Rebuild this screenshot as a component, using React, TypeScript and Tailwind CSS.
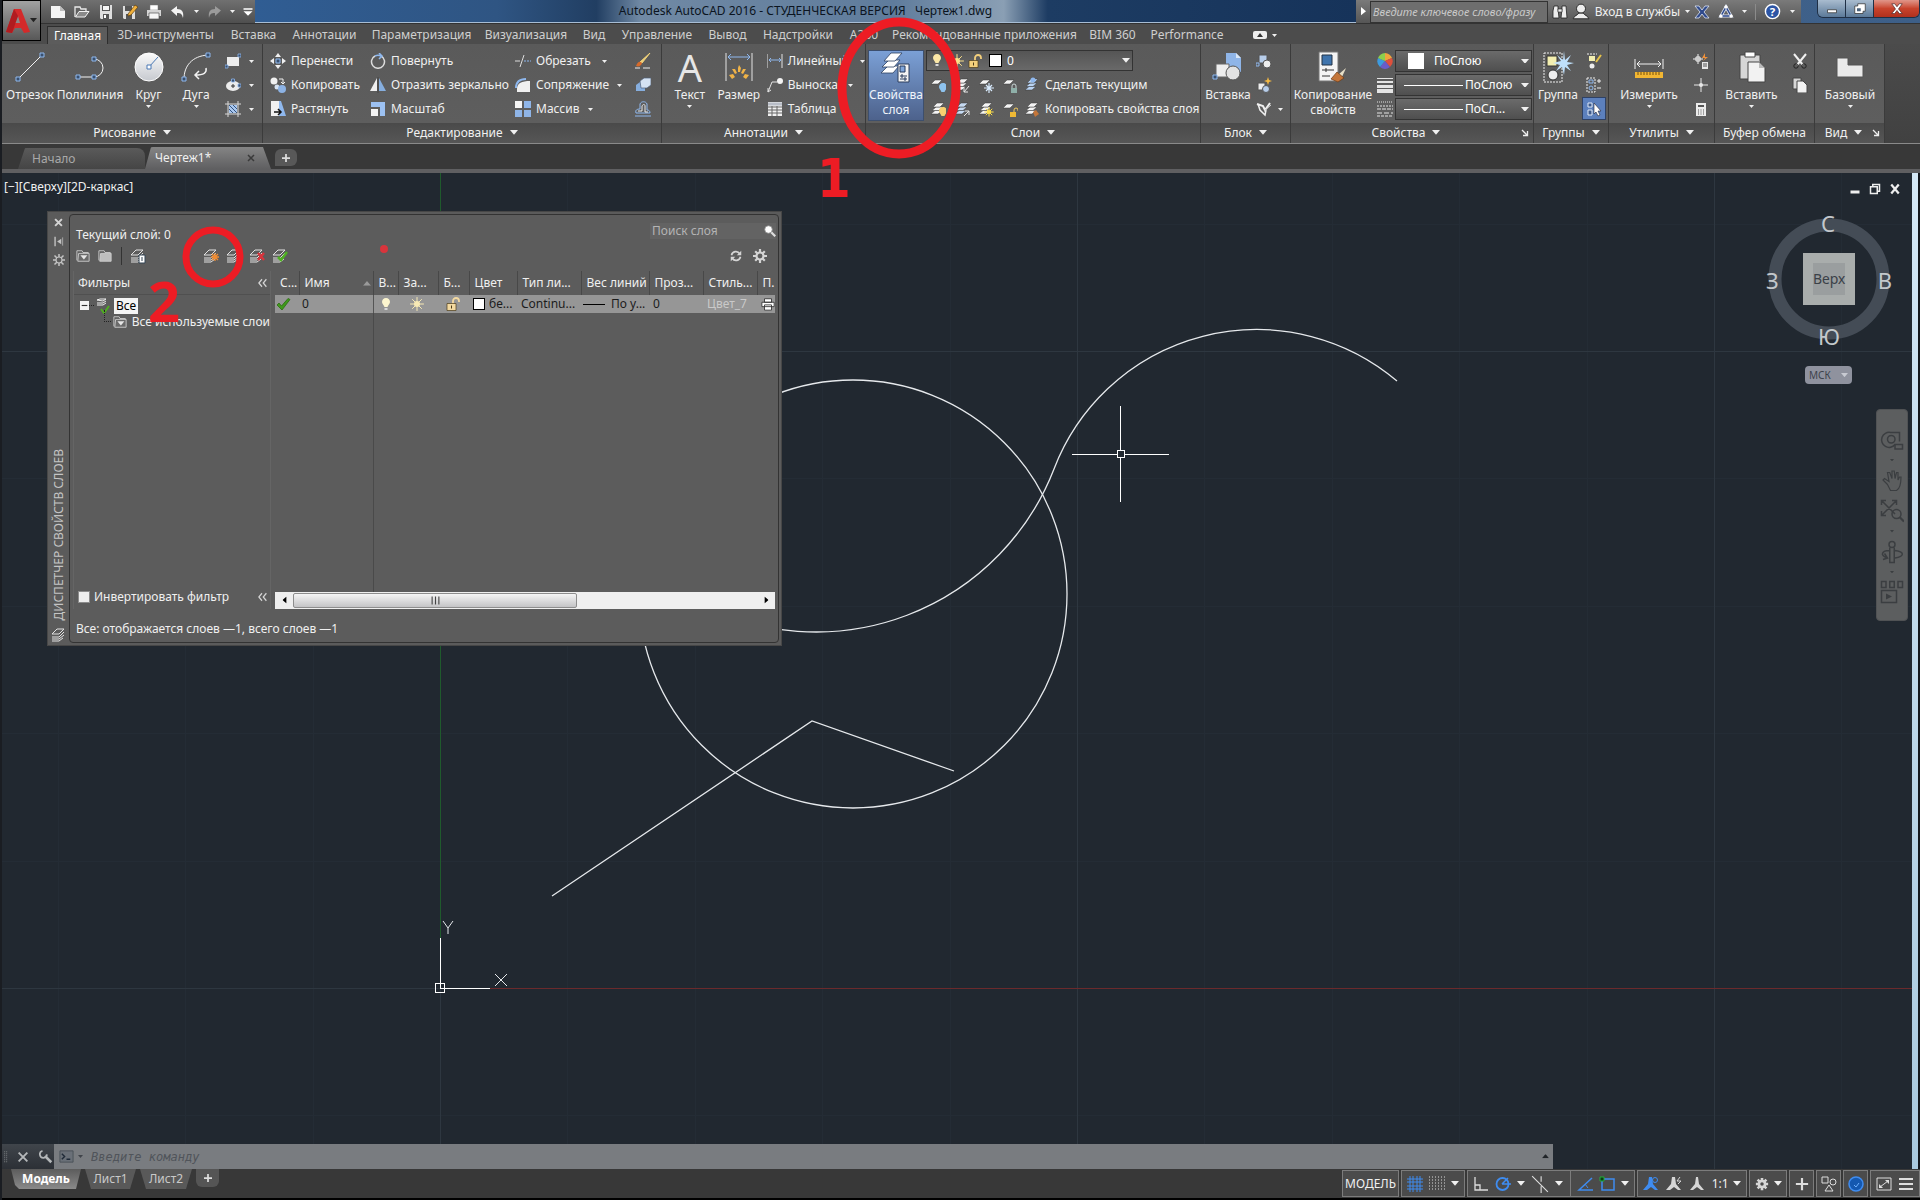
import { useState } from "react"
import type { ReactNode } from "react"

const BLUE = "#8fb8ee"

function Ico({ children, className = "size-4" }: { children: ReactNode; className?: string }) {
  return (
    <svg viewBox="0 0 16 16" fill="none" className={`shrink-0 ${className}`} aria-hidden="true">
      {children}
    </svg>
  )
}

function Big({ children }: { children: ReactNode }) {
  return (
    <svg viewBox="0 0 32 32" fill="none" className="size-8 shrink-0" aria-hidden="true">
      {children}
    </svg>
  )
}

function Arrow({ className = "w-[6px]" }: { className?: string }) {
  return (
    <svg viewBox="0 0 10 6" className={`shrink-0 ${className}`} aria-hidden="true">
      <path d="M0 0H10L5 6Z" fill="currentColor" />
    </svg>
  )
}

function Launcher() {
  return (
    <svg viewBox="0 0 8 8" className="size-2" fill="none" stroke="#eee" aria-hidden="true">
      <path d="M1 1L6 6M6.500 2V6.500H2" strokeWidth="1.300" />
    </svg>
  )
}

/* ---------- small shapes shared by several icons ---------- */

function Sheets({ fill = "#f4f4f4" }: { fill?: string }) {
  return (
    <g fill={fill} stroke="#3a3a3a" strokeWidth="0.500">
      <path d="M1 13L5 9.500H12L8 13Z" />
      <path d="M2 9.500L6 6H13L9 9.500Z" />
      <path d="M3 6L7 2H14L10 6Z" />
    </g>
  )
}

function Sheet() {
  return <path d="M1 7L5 3H12L8 7Z" fill="#f4f4f4" stroke="#3a3a3a" strokeWidth="0.500" />
}

function Bulb({ x = 0, y = 0, color = "#fbe7a6" }: { x?: number; y?: number; color?: string }) {
  return (
    <g transform={`translate(${x} ${y})`}>
      <path d="M4 0C1.500 0 0 2 0 4C0 6 2 7 2.500 9H5.500C6 7 8 6 8 4C8 2 6.500 0 4 0Z" fill={color} />
      <path d="M2.500 10H5.500V12H2.500Z" fill="#d8d8d8" />
    </g>
  )
}

function Sun({ x = 8, y = 8, r = 3, color = "#fbe08a" }: { x?: number; y?: number; r?: number; color?: string }) {
  return (
    <g transform={`translate(${x} ${y})`}>
      <path
        d={`M0 ${-r * 2.3}V${r * 2.3}M${-r * 2.3} 0H${r * 2.3}M${-r * 1.6} ${-r * 1.6}L${r * 1.6} ${r * 1.6}M${r * 1.6} ${-r * 1.6}L${-r * 1.6} ${r * 1.6}`}
        stroke={color}
      />
      <circle r={r} fill={color} />
    </g>
  )
}

function Lock({ color = "#f3cf7c" }: { color?: string }) {
  return (
    <>
      <path d="M8 8V5A3 3 0 0 1 14 5V6" stroke={color} strokeWidth="1.800" />
      <path d="M2 7.500H11V14.500H2Z" fill={color} stroke="#4b3b18" strokeWidth="0.700" />
      <path d="M6.500 9.500V12.500" stroke="#4b3b18" />
    </>
  )
}

function Check({ color = "#5fae28" }: { color?: string }) {
  return <path d="M2 9L4 7L6.500 10L13 2.500L15 3.500L7 14Z" fill={color} stroke="#2d6b12" strokeWidth="0.800" />
}

/* ---------- ribbon building blocks ---------- */

function Panel({
  title,
  width,
  arrow = true,
  launcher = false,
  children,
}: {
  title: string
  width: string
  arrow?: boolean
  launcher?: boolean
  children: ReactNode
}) {
  return (
    <section className={`flex shrink-0 flex-col border-r border-[#3b3b3b] ${width}`}>
      <div className="flex h-[79px] items-start bg-linear-to-b from-[#5a5a5a] to-[#5e5e5e] pt-[5px]">{children}</div>
      <div className="flex h-5 items-center justify-center bg-linear-to-b from-[#4a4a4a] to-[#565656] pb-px">
        <button className="flex flex-1 items-center justify-center gap-[7px] leading-4">
          {title}
          {arrow && <Arrow className="w-2" />}
        </button>
        {launcher && (
          <button className="w-3" aria-label={`${title}: параметры`}>
            <Launcher />
          </button>
        )}
      </div>
    </section>
  )
}

function BigButton({
  label,
  second,
  width,
  arrow = false,
  children,
}: {
  label: string
  second?: string
  width: string
  arrow?: boolean
  children: ReactNode
}) {
  return (
    <button className={`flex shrink-0 flex-col items-center pt-[2px] leading-[15px] whitespace-nowrap ${width}`}>
      {children}
      <span className="mt-1">{label}</span>
      {second && <span>{second}</span>}
      {arrow && <Arrow className="mt-[3px] w-[5px]" />}
    </button>
  )
}

function Row({ icon, label, arrow, gap = "gap-2" }: { icon: ReactNode; label?: string; arrow?: boolean; gap?: string }) {
  return (
    <button className={`flex h-6 items-center whitespace-nowrap ${gap}`}>
      <span className="flex items-center gap-[5px]">
        {icon}
        {label}
      </span>
      {arrow && <Arrow className="w-[5px]" />}
    </button>
  )
}

function IconButton({ label, children, className = "size-6" }: { label: string; children: ReactNode; className?: string }) {
  return (
    <button aria-label={label} className={`flex shrink-0 items-center justify-center ${className}`}>
      {children}
    </button>
  )
}

/* ---------- title bar ---------- */

function QuickAccess() {
  return (
    <div className="flex h-[23px] w-[215px] shrink-0 items-center bg-linear-to-b from-[#707070] to-[#4f4f4f] pl-[6px]">
      <IconButton label="Создать">
        <Ico>
          <path d="M1 2H10L15 7V14H1Z" fill="#f5f5f5" />
          <path d="M10 2V7H15Z" fill="#bdbdbd" />
        </Ico>
      </IconButton>
      <IconButton label="Открыть">
        <Ico>
          <path d="M1 13V3H6L7 5H12V7" stroke="#e9e9e9" strokeWidth="1.300" />
          <path d="M1.500 13L5 7.500H15L11 13Z" fill="#8a8a8a" stroke="#f2f2f2" />
        </Ico>
      </IconButton>
      <IconButton label="Сохранить">
        <Ico>
          <path d="M2 1H14V15H3L2 14Z" fill="#dedede" />
          <path d="M4 1H12V7H4Z" fill="#555" />
          <path d="M5 2H11V6H5Z" fill="#f5f5f5" />
          <path d="M5 10H11V15H5Z" fill="#555" />
          <path d="M6 11H8V14H6Z" fill="#fff" />
        </Ico>
      </IconButton>
      <IconButton label="Сохранить как">
        <Ico>
          <path d="M1 2H13V15H2L1 14Z" fill="#dedede" />
          <path d="M3 2H10V7H3ZM4 10H10V15H4Z" fill="#555" />
          <path d="M6 10L13 1L16 3L9 11L6 12Z" fill="#f1b13c" stroke="#5c3d10" strokeWidth="0.700" />
        </Ico>
      </IconButton>
      <IconButton label="Печать">
        <Ico>
          <path d="M4 1H12V6H4Z" fill="#fff" stroke="#777" strokeWidth="0.500" />
          <path d="M1 6H15V12H1Z" fill="#d5d5d5" />
          <path d="M3 9H13V15H3Z" fill="#f7f7f7" stroke="#555" strokeWidth="0.700" />
        </Ico>
      </IconButton>
      <IconButton label="Отменить">
        <Ico>
          <path d="M1 6.500L7 2V5C12 5 14 8 13 14C12 10 11 9 7 9V12Z" fill="#f3f3f3" />
        </Ico>
      </IconButton>
      <IconButton label="Список отмены" className="h-6 w-3">
        <Arrow className="w-[5px]" />
      </IconButton>
      <IconButton label="Повторить">
        <Ico>
          <path d="M15 6.500L9 2V5C4 5 2 8 3 14C4 10 5 9 9 9V12Z" fill="#9b9b9b" />
        </Ico>
      </IconButton>
      <IconButton label="Список повтора" className="h-6 w-3">
        <Arrow className="w-[5px]" />
      </IconButton>
      <IconButton label="Настройка панели" className="h-6 w-5">
        <Ico className="size-3">
          <path d="M2 3H14V5H2ZM2 7H14L8 13Z" fill="#fff" />
        </Ico>
      </IconButton>
    </div>
  )
}

function InfoCenter() {
  return (
    <div className="flex h-[23px] w-[445px] shrink-0 items-center bg-linear-to-b from-[#7a7a7a] to-[#565656]">
      <IconButton label="Свернуть поиск" className="h-6 w-[14px]">
        <svg viewBox="0 0 6 10" className="w-[5px]" aria-hidden="true">
          <path d="M0 0L6 5L0 10Z" fill="#fff" />
        </svg>
      </IconButton>
      <input
        aria-label="Поиск"
        placeholder="Введите ключевое слово/фразу"
        className="h-[22px] w-[180px] border border-[#333] bg-[#6e6e6e] px-[2px] text-[11px] italic placeholder:text-[#c9c9c9]"
      />
      <IconButton label="Найти" className="h-6 w-6">
        <Ico className="size-4">
          <path d="M2 2H6V5L7 14H1V7ZM10 2H14L15 14H9L10 5Z" fill="#ededed" stroke="#222" strokeWidth="0.800" />
          <path d="M6 5H10V8H6Z" fill="#ededed" stroke="#222" strokeWidth="0.600" />
        </Ico>
      </IconButton>
      <button className="flex items-center gap-[5px] whitespace-nowrap">
        <Ico className="size-[18px]">
          <circle cx="8" cy="5" r="4" fill="#ededed" stroke="#222" strokeWidth="0.800" />
          <path d="M1 14C2 11 5 11 6 9H10C11 11 14 11 15 14Z" fill="#ededed" stroke="#222" strokeWidth="0.800" />
        </Ico>
        Вход в службы
        <Arrow className="w-[5px]" />
      </button>
      <span className="flex-1" />
      <IconButton label="Exchange Apps">
        <Ico>
          <path d="M1 2H5L8 6L11 2H15L10 8L15 14H11L8 10L5 14H1L6 8Z" fill="#2f4a8c" stroke="#dfe6f5" strokeWidth="0.800" />
        </Ico>
      </IconButton>
      <IconButton label="Autodesk 360">
        <Ico>
          <path d="M8 3L3 12H13Z" stroke="#dfe6f5" strokeWidth="3" />
          <path d="M8 3L3 12H13Z" stroke="#2f4a8c" strokeWidth="1.500" />
          <circle cx="8" cy="3" r="1.700" fill="#fff" />
          <circle cx="3" cy="12" r="1.700" fill="#fff" />
          <circle cx="13" cy="12" r="1.700" fill="#fff" />
        </Ico>
      </IconButton>
      <Arrow className="mx-1 w-[5px]" />
      <span className="mx-1 h-4 w-px bg-[#8b8b8b]" />
      <IconButton label="Справка">
        <svg viewBox="0 0 18 18" className="size-[17px]" aria-hidden="true">
          <circle cx="9" cy="9" r="7.500" fill="#2c55a5" stroke="#fff" strokeWidth="1.500" />
          <text x="9" y="13.500" textAnchor="middle" fontSize="12" fontWeight="700" fill="#fff">
            ?
          </text>
        </svg>
      </IconButton>
      <Arrow className="mx-[6px] w-[5px]" />
    </div>
  )
}

function WindowButtons() {
  return (
    <div className="ml-4 flex h-[18px] w-[103px] shrink-0 overflow-hidden rounded-b-md border border-t-0 border-[#1f2f45]">
      <IconButton label="Свернуть" className="h-full w-7 border-r border-[#1f2f45] bg-linear-to-b from-[#a9bccf] to-[#5c7a99]">
        <Ico className="size-3">
          <path d="M2 9H14V13H2Z" fill="#fff" stroke="#333" />
        </Ico>
      </IconButton>
      <IconButton label="Восстановить" className="h-full w-7 border-r border-[#1f2f45] bg-linear-to-b from-[#a9bccf] to-[#5c7a99]">
        <Ico className="size-3">
          <path d="M5 1H15V11H12V14H1V4H5Z" fill="#fff" stroke="#333" />
          <path d="M4 7H9V11H4Z" fill="#4a627c" />
        </Ico>
      </IconButton>
      <IconButton label="Закрыть" className="h-full flex-1 bg-linear-to-b from-[#e0968a] via-[#c8432c] to-[#b0301d]">
        <Ico className="size-3">
          <path d="M1 1H5L8 5L11 1H15L10 8L15 14H11L8 10L5 14H1L6 8Z" fill="#fff" stroke="#533" />
        </Ico>
      </IconButton>
    </div>
  )
}

/* ---------- ribbon ---------- */

const ribbonTabs = [
  { name: "Главная", width: "w-[61px]" },
  { name: "3D-инструменты", width: "w-[115px]" },
  { name: "Вставка", width: "w-[61px]" },
  { name: "Аннотации", width: "w-[81px]" },
  { name: "Параметризация", width: "w-[113px]" },
  { name: "Визуализация", width: "w-[96px]" },
  { name: "Вид", width: "w-10" },
  { name: "Управление", width: "w-[86px]" },
  { name: "Вывод", width: "w-[55px]" },
  { name: "Надстройки", width: "w-[86px]" },
  { name: "A360", width: "w-[46px]" },
  { name: "Рекомендованные приложения", width: "w-[195px]" },
  { name: "BIM 360", width: "w-[61px]" },
  { name: "Performance", width: "w-[88px]" },
]

function RibbonTabs() {
  const [active, setActive] = useState("Главная")
  return (
    <nav className="flex h-[21px] items-end border-t border-[#333] bg-[#4c4c4c] pl-[45px]">
      {ribbonTabs.map((tab) => (
        <button
          key={tab.name}
          onClick={() => setActive(tab.name)}
          className={`h-[18px] shrink-0 text-center leading-4 whitespace-nowrap ${tab.width} ${
            active === tab.name ? "border border-b-0 border-[#2e2e2e] bg-[#5c5c5c] text-white" : "text-[#cfcfcf]"
          }`}
        >
          {tab.name}
        </button>
      ))}
      <button aria-label="Свернуть ленту" className="ml-[22px] flex h-[18px] items-center gap-[5px]">
        <svg viewBox="0 0 14 8" className="w-[14px]" aria-hidden="true">
          <rect width="14" height="8" rx="2" fill="#eee" />
          <path d="M4 6L7 2L10 6Z" fill="#333" />
        </svg>
        <Arrow className="w-[5px]" />
      </button>
    </nav>
  )
}

function DrawPanel() {
  return (
    <Panel title="Рисование" width="w-[261px]">
      <span className="w-[2px]" />
      <BigButton label="Отрезок" width="w-[52px]">
        <Big>
          <path d="M4 28L28 4" stroke="#f2f2f2" />
          <path d="M2 26H6V30H2ZM26 2H30V6H26Z" fill="#39506f" stroke={BLUE} />
        </Big>
      </BigButton>
      <BigButton label="Полилиния" width="w-[68px]">
        <Big>
          <path d="M4 26H20A9 9 0 0 0 20 8" stroke="#f2f2f2" />
          <path d="M2 24H6V28H2ZM18 24H22V28H18ZM18 6H22V10H18Z" fill="#39506f" stroke={BLUE} />
        </Big>
      </BigButton>
      <BigButton label="Круг" width="w-[49px]" arrow>
        <Big>
          <defs>
            <linearGradient id="disc" x1="0" y1="0" x2="0" y2="1">
              <stop stopColor="#fafafa" />
              <stop offset="1" stopColor="#c6c9cf" />
            </linearGradient>
          </defs>
          <circle cx="16" cy="16" r="14" fill="url(#disc)" stroke="#fff" />
          <path d="M16 16L25 6" stroke="#4b79b5" />
          <path d="M14 14H18V18H14Z" fill="#fff" stroke="#4b79b5" />
        </Big>
      </BigButton>
      <BigButton label="Дуга" width="w-[46px]" arrow>
        <Big>
          <path d="M4 28C4 15 12 5 28 4" stroke="#f2f2f2" />
          <path d="M26 17C27 22 24 24 15 24M19 20L15 24L19 28" stroke="#f2f2f2" strokeWidth="1.500" />
          <path d="M2 26H6V30H2ZM26 2H30V6H26Z" fill="#39506f" stroke={BLUE} />
        </Big>
      </BigButton>
      <div className="flex flex-col pl-[6px]">
        <Row
          arrow
          icon={
            <Ico>
              <path d="M2 4H14V13H2Z" fill="#ececec" />
              <path d="M0 12H3V15H0ZM13 1H16V4H13Z" fill="#39506f" stroke={BLUE} strokeWidth="0.800" />
            </Ico>
          }
        />
        <Row
          arrow
          icon={
            <Ico>
              <ellipse cx="8" cy="9" rx="7" ry="5" fill="#ececec" />
              <path d="M8 7V11M6 9H10" stroke="#333" />
              <path d="M6.500 2H9.500V5H6.500ZM13 7H16V10H13Z" fill="#39506f" stroke={BLUE} strokeWidth="0.800" />
            </Ico>
          }
        />
        <Row
          arrow
          icon={
            <Ico>
              <path d="M3 0V16M13 0V16M0 3H16M0 13H16" stroke="#d9d9d9" />
              <path d="M4 4H12V12H4Z" fill="#a9c8f0" />
              <path d="M4 8L8 12M4 4L12 12M8 4L12 8" stroke="#34527c" />
            </Ico>
          }
        />
      </div>
    </Panel>
  )
}

function EditPanel() {
  return (
    <Panel title="Редактирование" width="w-[399px]">
      <div className="flex w-[107px] flex-col pl-[7px]">
        <Row
          label="Перенести"
          icon={
            <Ico>
              <path d="M8 0L11 4H5ZM8 16L5 12H11ZM0 8L4 5V11ZM16 8L12 11V5Z" fill="#f0f0f0" />
              <path d="M6 6H10V10H6Z" fill="#39506f" stroke={BLUE} />
            </Ico>
          }
        />
        <Row
          label="Копировать"
          icon={
            <Ico>
              <circle cx="4" cy="4" r="3.500" fill="#f0f0f0" />
              <circle cx="7" cy="10" r="2.500" fill="#d7e3f2" />
              <circle cx="12" cy="12" r="4" fill="#8cb2e4" />
              <path d="M9 2H13V6M11 5L13 7L15 5" stroke="#f0f0f0" />
            </Ico>
          }
        />
        <Row
          label="Растянуть"
          icon={
            <Ico>
              <path d="M1 0H9V15H1Z" fill="#f0f0f0" />
              <path d="M9 0H11L16 15H9Z" fill={BLUE} />
              <path d="M4 11H11M8 8L11 11L8 14" stroke="#111" strokeWidth="1.500" />
            </Ico>
          }
        />
      </div>
      <div className="flex w-[145px] flex-col">
        <Row
          label="Повернуть"
          icon={
            <Ico>
              <path d="M5 3A6.500 6.500 0 1 0 11 3" stroke="#dcdcdc" strokeWidth="1.500" />
              <path d="M5 3A7 7 0 0 1 11 3M9 0L12 3L9 6" stroke={BLUE} strokeWidth="1.500" />
            </Ico>
          }
        />
        <Row
          label="Отразить зеркально"
          icon={
            <Ico>
              <path d="M7 1V14H0Z" fill="#f0f0f0" />
              <path d="M9 1V14H16Z" fill="#86aede" />
              <path d="M8 0V16" stroke="#444" />
            </Ico>
          }
        />
        <Row
          label="Масштаб"
          icon={
            <Ico>
              <path d="M1 1H15V15H10V6H1Z" fill="#9cc1f2" />
              <path d="M1 8H8V15H1Z" fill="#f4f4f4" />
            </Ico>
          }
        />
      </div>
      <div className="flex w-[120px] flex-col">
        <Row
          label="Обрезать"
          arrow
          gap="gap-[11px]"
          icon={
            <Ico>
              <path d="M0 8H5M5 14L9 2" stroke="#dcdcdc" />
              <path d="M9 8H16" stroke={BLUE} strokeDasharray="2 1" />
            </Ico>
          }
        />
        <Row
          label="Сопряжение"
          arrow
          icon={
            <Ico>
              <path d="M2 16V12C2 6 7 4 15 4V15H2Z" fill="#f0f0f0" />
              <path d="M1 11C1 5 5 2 11 2" stroke={BLUE} strokeWidth="2" />
            </Ico>
          }
        />
        <Row
          label="Массив"
          arrow
          icon={
            <Ico>
              <path d="M0 0H7V7H0Z" fill="#f4f4f4" />
              <path d="M9 0H16V7H9ZM0 9H7V16H0ZM9 9H16V16H9Z" fill="#8fb5e8" />
            </Ico>
          }
        />
      </div>
      <div className="flex flex-col">
        <Row
          icon={
            <Ico>
              <path d="M15 0L7 10L5 9Z" fill="#f0d27a" stroke="#f0d27a" />
              <path d="M1 13C3 8 5 8 7 10C6 13 4 14 1 13Z" fill="#d76a2a" />
              <path d="M0 15H5M8 15H15" stroke="#eee" />
            </Ico>
          }
        />
        <Row
          icon={
            <Ico>
              <path d="M1 8L5 5H10V14H1Z" fill="#86aede" />
              <path d="M5 4L9 1H16V8L12 11H6Z" fill="#d4e2f3" stroke="#4d5f78" strokeWidth="0.700" />
            </Ico>
          }
        />
        <Row
          icon={
            <Ico>
              <path d="M0 15H16M1 12C0 9 2 8 5 8V3C6 0 11 0 12 3V9C14 9 15 10 15 12H1Z" stroke={BLUE} />
              <path d="M3 10H7V5C8 3 10 3 10 5V11H13" stroke="#e9e9e9" />
            </Ico>
          }
        />
      </div>
    </Panel>
  )
}

function AnnotationPanel() {
  return (
    <Panel title="Аннотации" width="w-[204px]">
      <span className="w-[7px]" />
      <BigButton label="Текст" width="w-[44px]" arrow>
        <span className="h-8 text-[38px] leading-8 text-[#e6e6e6]">A</span>
      </BigButton>
      <BigButton label="Размер" width="w-[54px]">
        <Big>
          <path d="M3 2V30M29 2V30" stroke="#e4e4e4" />
          <path d="M5 6H27M8 3L5 6L8 9M24 3L27 6L24 9" stroke={BLUE} />
          <g fill="#f0b347">
            <path d="M15 17L16 14L18 17L17 21H15Z" />
            <path d="M9 18L12 18L14 22L12 23Z" />
            <path d="M23 18L20 18L18 22L20 23Z" />
            <path d="M6 24L10 23L12 26L9 28Z" />
            <path d="M26 24L22 23L20 26L23 28Z" />
          </g>
        </Big>
      </BigButton>
      <div className="flex flex-col pl-px">
        <Row
          label="Линейный"
          arrow
          gap="gap-[11px]"
          icon={
            <Ico>
              <path d="M0 1V15M15 1V15" stroke="#e4e4e4" />
              <path d="M2 7H14M4 5L2 7L4 9M12 5L14 7L12 9" stroke={BLUE} />
            </Ico>
          }
        />
        <Row
          label="Выноска"
          arrow
          gap="gap-[10px]"
          icon={
            <Ico>
              <path d="M1 15L5 5H10M1 11V15L4 13" stroke="#e4e4e4" />
              <circle cx="13" cy="4" r="3" fill="#f4f4f4" />
            </Ico>
          }
        />
        <Row
          label="Таблица"
          icon={
            <Ico>
              <path d="M1 1H15V15H1Z" fill="#f0f0f0" />
              <path d="M1 3H15" stroke="#b9bec8" strokeWidth="3" />
              <path d="M1 6H15M1 9H15M1 12H15M5 5V15M10 5V15" stroke="#666" />
            </Ico>
          }
        />
      </div>
    </Panel>
  )
}

function LayersPanel() {
  return (
    <Panel title="Слои" width="w-[335px]">
      <button className="mt-px ml-[2px] flex h-[71px] w-14 shrink-0 flex-col items-center border border-[#3d4f6d] bg-linear-to-b from-[#7ba0d6] to-[#4d628c] leading-[15px] text-[#f0f4fb]">
        <Big>
          <g fill="#fff" stroke="#2c3f5f" strokeWidth="0.800">
            <path d="M1 22L8 15H19L13 22Z" />
            <path d="M2 16L9 9H20L14 16Z" />
            <path d="M4 10L11 2H22L15 10Z" />
          </g>
          <path d="M18 13H29V31H18Z" fill="#f4f4f4" stroke="#2c3f5f" />
          <path d="M20 15H25V21H20Z" fill="#7fa5da" stroke="#24385a" />
          <path d="M20 25H27M20 28H27M22 23V27M25 26V30" stroke="#24385a" />
        </Big>
        <span className="mt-1">Свойства</span>
        <span>слоя</span>
      </button>
      <div className="flex flex-col pt-px pl-[2px]">
        <div className="mb-[2px] flex h-[21px] w-[207px] items-center border border-[#333] bg-linear-to-b from-[#555] to-[#696969]">
          <Ico className="mx-[2px] size-4">
            <Bulb x={4} y={1} />
          </Ico>
          <Ico className="mx-[2px] size-4">
            <Sun />
          </Ico>
          <Ico className="size-4">
            <Lock />
          </Ico>
          <span className="ml-[6px] size-[13px] border border-black bg-white" />
          <select
            aria-label="Текущий слой"
            className="h-5 flex-1 appearance-none bg-transparent pl-[5px] text-white outline-none"
          >
            <option>0</option>
          </select>
          <Arrow className="mr-[2px] w-2" />
        </div>
        <div className="flex items-center">
          <IconButton label="Отключить">
            <Ico>
              <Sheet />
              <Bulb x={9} y={6} color="#8ec3ef" />
            </Ico>
          </IconButton>
          <IconButton label="Изолировать">
            <Ico>
              <Sheets />
              <path d="M15 9L10 15M10 11V15H14" stroke="#e8e8e8" />
            </Ico>
          </IconButton>
          <IconButton label="Заморозить">
            <Ico>
              <Sheet />
              <path d="M11 6V16M6 11H16M8 8L14 14M14 8L8 14" stroke="#d9ecff" strokeWidth="1.200" />
            </Ico>
          </IconButton>
          <IconButton label="Блокировать">
            <Ico>
              <Sheet />
              <path d="M10 11V9A2 2 0 0 1 14 9V11" stroke="#c9d6d6" />
              <path d="M9 11H15V16H9Z" fill="#8fb0a9" />
            </Ico>
          </IconButton>
          <Row
            label="Сделать текущим"
            icon={
              <Ico className="ml-[2px] size-4">
                <Sheets fill="#b9d3f3" />
                <circle cx="9" cy="3" r="2.500" fill={BLUE} />
              </Ico>
            }
          />
        </div>
        <div className="flex items-center">
          <IconButton label="Включить все">
            <Ico>
              <Sheets />
              <Bulb x={9} y={6} color="#f7d070" />
            </Ico>
          </IconButton>
          <IconButton label="Отключить изоляцию">
            <Ico>
              <Sheets fill="#c5d9f1" />
              <path d="M10 15L15 10M11 10H15V14" stroke="#e8e8e8" />
            </Ico>
          </IconButton>
          <IconButton label="Разморозить все">
            <Ico>
              <Sheets />
              <Sun x={11} y={11} r={2} color="#ffe14a" />
            </Ico>
          </IconButton>
          <IconButton label="Разблокировать">
            <Ico>
              <Sheet />
              <path d="M12 11V9A2 2 0 0 1 16 9V10" stroke="#f0c95c" />
              <path d="M8 11H14V16H8Z" fill="#f0b934" />
            </Ico>
          </IconButton>
          <Row
            label="Копировать свойства слоя"
            icon={
              <Ico className="ml-[2px] size-4">
                <Sheets />
                <path d="M9 11L12 9L15 13L11 16Z" fill="#c4763a" />
              </Ico>
            }
          />
        </div>
      </div>
    </Panel>
  )
}

function BlockPanel() {
  return (
    <Panel title="Блок" width="w-[90px]">
      <BigButton label="Вставка" width="w-[54px]">
        <Big>
          <path d="M14 2H24L29 7V21H14Z" fill="#8fb5e8" />
          <path d="M24 2V7H29Z" fill="#dbe8f8" />
          <path d="M4 13H17V26H4Z" fill="#ededed" stroke="#666" />
          <circle cx="21" cy="22" r="7" fill="#e2e2e2" stroke="#555" />
          <path d="M1 24H5V28H1Z" fill="#39506f" stroke={BLUE} />
        </Big>
      </BigButton>
      <div className="flex flex-col pl-px">
        <Row
          icon={
            <Ico>
              <path d="M3 2H11V10H3Z" fill="#b7cdea" stroke="#555" />
              <circle cx="11" cy="11" r="4" fill="#ededed" stroke="#555" />
              <path d="M0 10H3V13H0Z" stroke={BLUE} />
            </Ico>
          }
        />
        <Row
          icon={
            <Ico>
              <path d="M2 6H9V13H2Z" fill="#ededed" stroke="#555" />
              <circle cx="10" cy="12" r="3.500" fill="#b7cdea" stroke="#555" />
              <path d="M12 0L13 3L16 4L13 5L12 8L11 5L8 4L11 3Z" fill="#f5b942" />
            </Ico>
          }
        />
        <Row
          arrow
          gap="gap-[6px]"
          icon={
            <Ico>
              <path d="M1 3L7 5L9 9L14 2" stroke="#f0f0f0" strokeWidth="2" />
              <path d="M2 3L4 9L9 14L10 9" stroke="#f0f0f0" strokeWidth="1.500" />
              <path d="M8 10L15 4" stroke="#cfcfcf" />
            </Ico>
          }
        />
      </div>
    </Panel>
  )
}

function PropertyCombo({ name, value, swatch }: { name: string; value: string; swatch?: boolean }) {
  return (
    <div className="flex h-[22px] w-[137px] items-center border border-[#333] bg-linear-to-b from-[#6b6b6b] to-[#4f4f4f]">
      {swatch ? (
        <span className="mr-[10px] ml-3 size-4 bg-white" />
      ) : (
        <span className="mr-[2px] ml-2 h-px w-[59px] shrink-0 bg-white" />
      )}
      <select aria-label={name} className="h-5 min-w-0 flex-1 appearance-none bg-transparent text-white outline-none">
        <option>{value}</option>
      </select>
      <Arrow className="mr-[2px] w-2" />
    </div>
  )
}

function PropertiesPanel() {
  return (
    <Panel title="Свойства" width="w-[243px]" launcher>
      <BigButton label="Копирование" second="свойств" width="w-[84px]">
        <Big>
          <path d="M2 1H21V30H2Z" fill="#f4f4f4" stroke="#777" />
          <path d="M5 4H15V14H5Z" fill="#3f74ad" stroke="#234" />
          <path d="M5 19H17M5 25H13M9 17V21" stroke="#333" />
          <path d="M29 17L22 23L25 26Z" fill="#e8e0c8" />
          <path d="M20 21L27 27L21 31L14 28Z" fill="#c4763a" stroke="#6b3a14" strokeWidth="0.700" />
        </Big>
      </BigButton>
      <div className="flex flex-col gap-[2px] pt-px pl-[2px]">
        <div className="flex items-center gap-[2px]">
          <Ico>
            <path d="M8 8V0A8 8 0 0 1 15 5Z" fill="#f0a53c" />
            <path d="M8 8L15 5A8 8 0 0 1 13 14Z" fill="#e0503c" />
            <path d="M8 8L13 14A8 8 0 0 1 3 14Z" fill="#6a5cc8" />
            <path d="M8 8L3 14A8 8 0 0 1 1 5Z" fill="#3d9be0" />
            <path d="M8 8L1 5A8 8 0 0 1 8 0Z" fill="#8ccf4d" />
          </Ico>
          <PropertyCombo name="Цвет" value="ПоСлою" swatch />
        </div>
        <div className="flex items-center gap-[2px]">
          <Ico>
            <path d="M0 1H16V2H0ZM0 4H16V6H0ZM0 8H16V11H0ZM0 12H16V16H0Z" fill="#e4e4e4" />
          </Ico>
          <PropertyCombo name="Вес линий" value="ПоСлою" />
        </div>
        <div className="flex items-center gap-[2px]">
          <Ico>
            <path d="M0 1H16" stroke="#e4e4e4" strokeDasharray="1 1" />
            <path d="M0 5H16" stroke="#e4e4e4" strokeDasharray="2 1" />
            <path d="M0 8H16" stroke="#e4e4e4" strokeDasharray="4 1" />
            <path d="M0 12H16" stroke="#e4e4e4" strokeDasharray="5 2" />
            <path d="M0 15H16" stroke="#e4e4e4" strokeDasharray="3 1" />
          </Ico>
          <PropertyCombo name="Тип линий" value="ПоСл..." />
        </div>
      </div>
    </Panel>
  )
}

function GroupsPanel() {
  return (
    <Panel title="Группы" width="w-[75px]">
      <BigButton label="Группа" width="w-12">
        <Big>
          <path d="M2 2H20V31H2Z" stroke="#eee" strokeDasharray="2 1" />
          <path d="M5 5H15V15H5Z" fill="#f3efb0" stroke="#333" />
          <circle cx="11" cy="24" r="5" fill="#eee" stroke="#333" />
          <path
            d="M22 0L23 9L29 4L25 11L32 12L25 14L29 20L23 16L22 24L20 16L14 20L18 14L11 12L19 10L15 4L21 9Z"
            fill="#bfe0fb"
          />
        </Big>
      </BigButton>
      <div className="flex flex-col">
        <IconButton label="Разгруппировать">
          <Ico>
            <path d="M1 1H11" stroke="#eee" strokeDasharray="2 1" />
            <path d="M3 3H9V8H3Z" fill="#f3efb0" />
            <circle cx="6" cy="13" r="2.500" fill="#eee" />
            <path d="M15 2L10 9" stroke="#e6c34a" strokeWidth="2" />
          </Ico>
        </IconButton>
        <IconButton label="Редактирование группы">
          <Ico>
            <path d="M1 1H9V15H1Z" stroke="#eee" strokeDasharray="2 1" />
            <path d="M3 3H7V6H3Z" stroke={BLUE} />
            <circle cx="5" cy="11" r="2" stroke={BLUE} />
            <path d="M11 4H15M13 2V6M11 11H15" stroke="#eee" />
          </Ico>
        </IconButton>
        <IconButton label="Выбор групп" className="h-[23px] w-6 border border-[#2f4266] bg-[#5c80bd]">
          <Ico>
            <path d="M2 2H6V6H2ZM2 9H6V14H2Z" fill="#3e5b8c" stroke="#dfe9f8" />
            <path d="M8 2V13L10 11L12 15L14 14L12 10H15Z" fill="#fff" stroke="#223" strokeWidth="0.600" />
          </Ico>
        </IconButton>
      </div>
    </Panel>
  )
}

function UtilitiesPanel() {
  return (
    <Panel title="Утилиты" width="w-[106px]">
      <BigButton label="Измерить" width="w-20" arrow>
        <Big>
          <path d="M2 8V18M30 8V18M4 13H28M7 10L4 13L7 16M25 10L28 13L25 16" stroke="#f2f2f2" />
          <path d="M2 21H30V27H2Z" fill="#f2b632" />
          <path d="M5 21V24M8 21V24M11 21V24M14 21V24M17 21V24M20 21V24M23 21V24M26 21V24" stroke="#76500c" />
        </Big>
      </BigButton>
      <div className="flex flex-col">
        <IconButton label="Быстрый выбор">
          <Ico>
            <path d="M5 1V11M0 6H10" stroke="#f2f2f2" />
            <path d="M3 4H7V8H3Z" stroke="#f2f2f2" />
            <path d="M12 0L9 5H12L10 8L15 4H12Z" fill="#f0913a" />
            <path d="M9 9H15V16H9Z" fill="#e8e8e8" />
            <path d="M10 11H14M10 13H14" stroke="#555" />
          </Ico>
        </IconButton>
        <IconButton label="Отображение точек">
          <Ico>
            <path d="M8 1V15M1 8H15" stroke="#e8e8e8" />
            <circle cx="8" cy="8" r="2" fill="#e8e8e8" />
          </Ico>
        </IconButton>
        <IconButton label="Калькулятор">
          <Ico>
            <path d="M3 2H13V15H3Z" fill="#ececec" />
            <path d="M5 4H11V6H5Z" fill="#555" />
            <path d="M5 9H6M7.500 9H8.500M10 9H11M5 11H6M7.500 11H8.500M10 11H11M5 13H6M7.500 13H8.500M10 13H11" stroke="#555" />
          </Ico>
        </IconButton>
      </div>
    </Panel>
  )
}

function ClipboardPanel() {
  return (
    <Panel title="Буфер обмена" width="w-[100px]" arrow={false}>
      <BigButton label="Вставить" width="w-[73px]" arrow>
        <Big>
          <path d="M4 4H24V28H4Z" fill="#d6d6d6" stroke="#444" />
          <path d="M9 1H19V6H9Z" fill="#fff" stroke="#444" />
          <path d="M12 11H23L29 17V31H12Z" fill="#f2f2f2" stroke="#444" />
          <path d="M23 11V17H29Z" fill="#bbb" />
        </Big>
      </BigButton>
      <div className="flex flex-col">
        <IconButton label="Вырезать">
          <Ico>
            <path d="M2 1L11 12M14 1L5 12" stroke="#f0f0f0" strokeWidth="2" />
            <circle cx="4" cy="13" r="2.200" stroke="#222" />
            <circle cx="12" cy="13" r="2.200" stroke="#222" />
          </Ico>
        </IconButton>
        <IconButton label="Копировать в буфер">
          <Ico>
            <path d="M1 1H9V12H1Z" fill="#d6d6d6" stroke="#444" />
            <path d="M5 4H11L15 8V16H5Z" fill="#f2f2f2" stroke="#444" />
          </Ico>
        </IconButton>
      </div>
    </Panel>
  )
}

function Ribbon() {
  return (
    <div className="flex h-[100px] border-b border-[#8a8a8a] bg-linear-to-b from-[#4b4b4b] to-[#414141]">
      <DrawPanel />
      <EditPanel />
      <AnnotationPanel />
      <LayersPanel />
      <BlockPanel />
      <PropertiesPanel />
      <GroupsPanel />
      <UtilitiesPanel />
      <ClipboardPanel />
      <Panel title="Вид" width="w-[70px]" launcher>
        <BigButton label="Базовый" width="w-[70px]" arrow>
          <Big>
            <path d="M3 7H14V14H29V26H3Z" fill="#eaeaea" stroke="#555" />
          </Big>
        </BigButton>
      </Panel>
    </div>
  )
}

/* ---------- document tabs ---------- */

function DocumentTabs() {
  return (
    <div className="flex h-[29px] items-end border-b-4 border-[#5f5f61] bg-[#383838] pl-4">
      <button className="h-[21px] w-[127px] rounded-t-lg bg-linear-to-b from-[#5a5a5a] to-[#454545] pl-[14px] text-left text-[#a9a9a9] [clip-path:polygon(7px_0,100%_0,100%_100%,0_100%)]">
        Начало
      </button>
      <div className="flex h-[22px] w-[126px] items-center justify-between rounded-t-lg bg-linear-to-b from-[#858585] to-[#5f5f61] pr-4 pl-[10px] [clip-path:polygon(6px_0,calc(100%-8px)_0,100%_100%,0_100%)]">
        <button>Чертеж1*</button>
        <button aria-label="Закрыть вкладку">
          <Ico className="size-2">
            <path d="M2 2L14 14M14 2L2 14" stroke="#3a3a3a" strokeWidth="3" />
          </Ico>
        </button>
      </div>
      <button
        aria-label="Новый чертеж"
        className="mb-[3px] ml-1 flex h-[17px] w-[22px] items-center justify-center rounded-t-md rounded-br-md bg-[#585858]"
      >
        <Ico className="size-2">
          <path d="M8 0V16M0 8H16" stroke="#ddd" strokeWidth="3.500" />
        </Ico>
      </button>
    </div>
  )
}

/* ---------- drawing area ---------- */

const gridColumns = [-3, -2, -1, 1, 2, 3, 4, 6, 7, 8, 9, 11].map((n) => Math.round(n * 127.4))
const gridRows = [-6, -4, -3, -2, -1, 1].map((n) => Math.round(n * 127.4))

function Drawing() {
  return (
    <svg className="absolute inset-0 size-full" fill="none">
      <g transform="translate(438 815)">
        <g stroke="#242c35" shapeRendering="crispEdges">
          {gridColumns.map((x) => (
            <path key={x} d={`M${x} -815V400`} />
          ))}
          {gridRows.map((y) => (
            <path key={y} d={`M-438 ${y}H1480`} />
          ))}
        </g>
        <path
          d="M637 -815V400M1274 -815V400M-438 -637H1480M-438 0H0M0 0V400"
          stroke="#2e3740"
          shapeRendering="crispEdges"
        />
        <path d="M0 -815V-50" stroke="#1f5a2c" shapeRendering="crispEdges" />
        <path d="M50 0H1480" stroke="#6b2a2c" shapeRendering="crispEdges" />

        <g stroke="#e6e9ec" strokeWidth="1.300">
          <circle cx="413" cy="-394" r="214" />
          <path d="M260 -384A255 255 0 0 0 614 -519A217 217 0 0 1 957 -607" />
          <path d="M112 -92L372 -267L514 -217" />
        </g>

        <g stroke="#fff" shapeRendering="crispEdges">
          <path d="M632 -534H677M684 -534H729M680 -582V-538M680 -531V-486" />
          <path d="M677 -538H684V-531H677Z" />
          <path d="M0 -50V0H50M-5 -5H4V4H-5Z" />
        </g>
        <path d="M3 -67L8 -60L13 -67M8 -60V-54M55 -14L67 -2M67 -14L55 -2" stroke="#e6e9ec" />
      </g>
    </svg>
  )
}

function ViewCube() {
  return (
    <div className="absolute top-9 right-4 h-[176px] w-[134px] text-[22px] leading-6 text-[#c3c8cc]">
      <svg viewBox="0 0 134 140" className="absolute top-0 left-0 h-[140px] w-[134px]" fill="none" aria-hidden="true">
        <circle cx="67" cy="70" r="54" stroke="#444c56" strokeWidth="13" />
      </svg>
      <button className="absolute top-0.5 left-[59px]">С</button>
      <button className="absolute top-[59px] left-1">З</button>
      <button className="absolute top-[59px] right-1">В</button>
      <button className="absolute top-[115px] left-[56px]">Ю</button>
      <button className="absolute top-[44px] left-[41px] flex size-[52px] items-center justify-center bg-[#a9adac]">
        <span className="flex size-8 items-center justify-center bg-[#9a9e9f] text-sm text-[#3b4148]">Верх</span>
      </button>
      <button className="absolute top-[157px] left-[43px] flex h-[18px] w-[47px] items-center justify-between rounded bg-[#8f929e] px-1 text-[10px] leading-4 text-[#3d424b]">
        МСК
        <Arrow className="w-[7px] text-[#c8cad2]" />
      </button>
    </div>
  )
}

function NavigationBar() {
  return (
    <div className="absolute top-[236px] right-[4px] flex h-[212px] w-8 flex-col items-center gap-[7px] rounded border border-[#505254] bg-[#5c5e5f] pt-[18px] text-[#3b3e41]">
      <IconButton label="Штурвал" className="h-6 w-6">
        <Ico className="size-6">
          <path d="M13 9V3H7A5 5 0 1 0 10 11" stroke="currentColor" />
          <circle cx="7.500" cy="7.500" r="2.500" stroke="currentColor" />
          <path d="M10 11H15V14H10Z" stroke="currentColor" />
        </Ico>
      </IconButton>
      <Arrow className="w-1" />
      <IconButton label="Панорамирование" className="h-6 w-6">
        <Ico className="size-6">
          <path
            d="M5 11L2 8L3 7L6 9L5 3L6.500 3L8 7V2H9.500L10 7L11 3H12L12 8L13 6L14 6C14 10 13 14 11 15H7Z"
            stroke="currentColor"
            strokeWidth="0.800"
          />
        </Ico>
      </IconButton>
      <IconButton label="Показать до границ" className="h-6 w-6">
        <Ico className="size-6">
          <path d="M1 1L10 10M11 1L1 11M1 4V1H4M8 1H11V4M1 8V11H4" stroke="currentColor" />
          <circle cx="11" cy="10" r="3" stroke="currentColor" />
          <path d="M13 12L16 15" stroke="currentColor" strokeWidth="1.500" />
        </Ico>
      </IconButton>
      <Arrow className="w-1" />
      <IconButton label="Орбита" className="h-6 w-6">
        <Ico className="size-6">
          <circle cx="8" cy="3" r="2" stroke="currentColor" />
          <path d="M6.500 5V15H9.500V5M5 12C-1 10 2 7 6 7M10 7C17 8 16 11 10 12M3 9L5 12L2 13" stroke="currentColor" />
        </Ico>
      </IconButton>
      <Arrow className="w-1" />
      <IconButton label="Аниматор" className="h-6 w-6">
        <Ico className="size-6">
          <path d="M1 1H4V5H1ZM6.500 1H9.500V5H6.500ZM12 1H15V5H12ZM1 7H11V15H1Z" stroke="currentColor" />
          <path d="M4 9L8 11L4 13Z" fill="currentColor" />
        </Ico>
      </IconButton>
    </div>
  )
}

/* ---------- layer manager palette ---------- */

const columns = [
  { label: "С...", width: "w-6" },
  { label: "Имя", width: "w-[74px]" },
  { label: "В...", width: "w-[25px]" },
  { label: "За...", width: "w-10" },
  { label: "Б...", width: "w-[31px]" },
  { label: "Цвет", width: "w-12" },
  { label: "Тип ли...", width: "w-16" },
  { label: "Вес линий", width: "w-[68px]" },
  { label: "Проз...", width: "w-[54px]" },
  { label: "Стиль...", width: "w-[54px]" },
  { label: "П.", width: "w-[18px]" },
]

function LayerTable() {
  return (
    <table className="w-[500px] table-fixed border-collapse text-left">
      <thead>
        <tr className="h-6">
          {columns.map((col) => (
            <th
              key={col.label}
              className={`overflow-hidden border-r border-[#484848] p-0 pl-[5px] font-normal whitespace-nowrap last:border-r-0 ${col.width}`}
            >
              {col.label === "Имя" ? (
                <span className="flex items-center justify-between pr-[2px]">
                  Имя
                  <Arrow className="w-2 rotate-180 text-[#9a9a9a]" />
                </span>
              ) : (
                col.label
              )}
            </th>
          ))}
        </tr>
      </thead>
      <tbody>
        <tr className="h-[18px] bg-[#969696] leading-4 whitespace-nowrap text-[#1c1c1c]">
          <td className="p-0">
            <Ico>
              <Check color="#3f9a1c" />
            </Ico>
          </td>
          <td className="border-r border-[#555] p-0 pl-[3px]">0</td>
          <td className="p-0 pl-1">
            <Ico>
              <Bulb x={4} y={2} color="#fdf6cf" />
            </Ico>
          </td>
          <td className="p-0 pl-[11px]">
            <Ico>
              <Sun color="#f7e9b4" />
            </Ico>
          </td>
          <td className="p-0 pl-[7px]">
            <Ico>
              <Lock color="#f3d9a0" />
            </Ico>
          </td>
          <td className="p-0 pl-1">
            <span className="flex items-center gap-1">
              <span className="size-3 border border-black bg-white" />
              бе...
            </span>
          </td>
          <td className="p-0 pl-1">Continu...</td>
          <td className="p-0 pl-[2px]">
            <span className="flex items-center gap-[6px]">
              <span className="h-px w-[22px] bg-black" />
              По у...
            </span>
          </td>
          <td className="p-0 pl-1">0</td>
          <td className="p-0 pl-1 text-[#c9c9c9]">Цвет_7</td>
          <td className="p-0 pl-1">
            <Ico className="h-4 w-[14px]">
              <path d="M4 2H12V6H4ZM1 6H15V11H1ZM4 9H12V15H4Z" fill="#fff" stroke="#333" />
            </Ico>
          </td>
        </tr>
      </tbody>
    </table>
  )
}

function LayerSheetIcon({ children }: { children?: ReactNode }) {
  return (
    <Ico>
      <path d="M1 7L6 2H13L8 7ZM1 10H8L13 5M1 12H8L13 8M1 14H8L12 11" stroke="#e2e2e2" />
      {children}
    </Ico>
  )
}

function FolderIcon({ filter = false }: { filter?: boolean }) {
  return (
    <Ico className="size-[14px]">
      <path d="M1 13V2H7L8 4H14V6" stroke="#cfcfcf" />
      <path d="M3 5H15V14H2Z" fill={filter ? "#6a6a6a" : "#bdbdbd"} stroke="#cfcfcf" />
      {filter && <path d="M5 7H13L9 12Z" fill="#e6e6e6" />}
    </Ico>
  )
}

function Chevrons() {
  return (
    <Ico className="size-[10px]">
      <path d="M8 2L3 8L8 14M15 2L10 8L15 14" stroke="#d4d4d4" strokeWidth="2" />
    </Ico>
  )
}

function LayerPalette() {
  const [invert, setInvert] = useState(false)
  return (
    <div className="absolute top-[38px] left-[45px] flex h-[435px] w-[735px] border border-[#474747] bg-[#5b5b5b]">
      <div className="flex w-[21px] flex-col items-center gap-[7px] pt-1 text-[#c4c4c4]">
        <IconButton label="Закрыть палитру" className="size-3">
          <Ico className="size-[9px]">
            <path d="M2 2L14 14M14 2L2 14" stroke="#d4d4d4" strokeWidth="3.500" />
          </Ico>
        </IconButton>
        <IconButton label="Автоматически скрывать" className="size-3">
          <Ico className="size-[11px]">
            <path d="M3 1V15" stroke="#c4c4c4" strokeWidth="2" />
            <path d="M6 8L12 4V12Z" fill="#c4c4c4" />
            <path d="M14 2V14" stroke="#c4c4c4" />
          </Ico>
        </IconButton>
        <IconButton label="Свойства палитры" className="size-3">
          <Ico className="size-3">
            <path d="M8 0V16M0 8H16M2 2L14 14M14 2L2 14" stroke="#c4c4c4" strokeWidth="2" />
            <circle cx="8" cy="8" r="4" fill="#5b5b5b" stroke="#c4c4c4" strokeWidth="1.500" />
          </Ico>
        </IconButton>
        <span className="mt-auto rotate-180 text-xs leading-4 whitespace-nowrap [writing-mode:vertical-rl]">
          ДИСПЕТЧЕР СВОЙСТВ СЛОЕВ
        </span>
        <span className="pb-[2px]">
          <LayerSheetIcon />
        </span>
      </div>

      <div className="my-[2px] mr-[2px] flex min-w-0 flex-1 flex-col rounded-sm border border-[#333] bg-[#5c5c5c] pl-[3px]">
        <div className="flex h-[27px] items-center justify-between pt-1 pr-[2px] pl-[3px]">
          <p className="pt-2">Текущий слой: 0</p>
          <label className="flex h-4 w-[126px] items-center bg-[#636363]">
            <input
              aria-label="Поиск слоя"
              placeholder="Поиск слоя"
              className="w-0 flex-1 bg-transparent pl-[2px] outline-none placeholder:text-[#b4b4b4]"
            />
            <Ico className="size-3">
              <path d="M9 9L15 15" stroke="#ddd" strokeWidth="3" />
              <circle cx="6" cy="6" r="5" fill="#fff" stroke="#888" />
            </Ico>
          </label>
        </div>
        <div className="flex h-[29px] items-center pr-[6px] pb-px">
          <IconButton label="Новый фильтр по свойствам" className="h-6 w-5">
            <FolderIcon filter />
          </IconButton>
          <IconButton label="Новый групповой фильтр">
            <FolderIcon />
          </IconButton>
          <span className="ml-1 h-[18px] w-px bg-[#333]" />
          <IconButton label="Диспетчер конфигураций слоев" className="ml-1 size-6">
            <LayerSheetIcon>
              <path d="M9 7H15V15H9Z" fill="#fff" stroke="#345" />
              <path d="M11 10H13M11 12H13" stroke="#345" />
            </LayerSheetIcon>
          </IconButton>
          <div className="ml-[49px] flex">
            <IconButton label="Создать слой" className="h-6 w-[23px]">
              <LayerSheetIcon>
                <path d="M12 5V13M8 9H16M9 6L15 12M15 6L9 12" stroke="#f08c32" strokeWidth="1.300" />
              </LayerSheetIcon>
            </IconButton>
            <IconButton label="Создать слой, замороженный на всех ВЭ" className="h-6 w-[23px]">
              <LayerSheetIcon />
            </IconButton>
            <IconButton label="Удалить слой" className="h-6 w-[23px]">
              <LayerSheetIcon>
                <path d="M9 5L15 12M15 5L9 12" stroke="#d8343c" strokeWidth="2.500" />
              </LayerSheetIcon>
            </IconButton>
            <IconButton label="Установить" className="h-6 w-[23px]">
              <LayerSheetIcon>
                <path d="M6 9L9 12L15 4" stroke="#4fb022" strokeWidth="2.500" />
              </LayerSheetIcon>
            </IconButton>
          </div>
          <span className="ml-auto" />
          <IconButton label="Обновить">
            <Ico className="size-3">
              <path d="M2 7A6 6 0 0 1 13 5M14 9A6 6 0 0 1 3 11" stroke="#d4d4d4" strokeWidth="2.200" />
              <path d="M15 1V7H9ZM1 15V9H7Z" fill="#d4d4d4" />
            </Ico>
          </IconButton>
          <IconButton label="Параметры">
            <Ico className="size-[14px]">
              <path d="M8 0V16M0 8H16M2.500 2.500L13.500 13.500M13.500 2.500L2.500 13.500" stroke="#d4d4d4" strokeWidth="2.500" />
              <circle cx="8" cy="8" r="4" fill="#5c5c5c" stroke="#d4d4d4" strokeWidth="2.500" />
            </Ico>
          </IconButton>
        </div>

        <div className="flex h-[338px]">
          <div className="flex w-[198px] flex-col border-x border-[#656565]">
            <div className="flex h-6 items-center justify-between border-b border-[#505050] pr-[3px] pl-1">
              Фильтры
              <button aria-label="Свернуть дерево">
                <Chevrons />
              </button>
            </div>
            <ul className="flex-1 leading-4 whitespace-nowrap">
              <li className="mt-[2px] flex h-[17px] items-center pl-[6px]">
                <Ico className="size-[9px]">
                  <path d="M0 0H16V16H0Z" fill="#f4f4f4" />
                  <path d="M3 8H13" stroke="#333" strokeWidth="2" />
                </Ico>
                <span className="w-[5px] border-t border-dotted border-[#222]" />
                <Ico>
                  <path d="M3 2L6 1H12L9 3ZM3 5H9L12 3M3 7H9L12 5" stroke="#eee" />
                  <path d="M7 11L10 15L15 8" stroke="#4fae20" strokeWidth="2" />
                </Ico>
                <span className="ml-1 bg-[#f4f4f4] px-[2px] text-black">Все</span>
              </li>
              <li className="flex h-4 items-center pl-[30px]">
                <span className="-mt-3 mr-[2px] h-3 w-3 border-b border-l border-dotted border-[#222]" />
                <FolderIcon filter />
                <span className="ml-[5px]">Все используемые слои</span>
              </li>
            </ul>
            <div className="flex h-6 items-center justify-between pr-[3px] pl-1">
              <label className="flex items-center gap-1">
                <input
                  type="checkbox"
                  checked={invert}
                  onChange={(e) => setInvert(e.target.checked)}
                  className="size-3 appearance-none border border-[#8c8c8c] bg-[#eee] checked:bg-[#4a78c0]"
                />
                Инвертировать фильтр
              </label>
              <button aria-label="Свернуть панель фильтров">
                <Chevrons />
              </button>
            </div>
          </div>

          <div className="ml-1 flex w-[500px] flex-col">
            <LayerTable />
            <div className="w-[99px] flex-1 border-r border-[#4a4a4a]" />
            <div className="flex h-[17px] items-center bg-[#efefef] text-black">
              <IconButton label="Прокрутить влево" className="h-full w-[18px]">
                <Arrow className="w-[7px] rotate-90" />
              </IconButton>
              <div className="flex h-[15px] w-[284px] items-center justify-center rounded-xs border border-[#8d8d8d] bg-linear-to-b from-[#f5f5f5] to-[#c4c4c6]">
                <Ico className="size-[9px]">
                  <path d="M2 1V15M8 1V15M14 1V15" stroke="#444" strokeWidth="2" />
                </Ico>
              </div>
              <IconButton label="Прокрутить вправо" className="ml-auto h-full w-[18px]">
                <Arrow className="w-[7px] -rotate-90" />
              </IconButton>
            </div>
          </div>
        </div>
        <p className="pt-3 pl-[3px]">Все: отображается слоев —1, всего слоев —1</p>
      </div>
    </div>
  )
}

/* ---------- command line and status bar ---------- */

function CommandLine() {
  return (
    <div className="absolute right-[359px] bottom-0 left-0 flex h-[25px] items-center bg-[#797c80]">
      <div className="flex h-full w-[52px] items-center gap-[7px] bg-linear-to-b from-[#40454b] to-[#2c3036] pl-[2px]">
        <svg viewBox="0 0 6 18" className="h-[18px] w-[6px]" aria-hidden="true">
          <path d="M1 0V18M4 0V18" stroke="#83868a" strokeDasharray="2 1" />
        </svg>
        <IconButton label="Закрыть командную строку" className="size-4">
          <Ico className="size-[10px]">
            <path d="M1 1L15 15M15 1L1 15" stroke="#b5b8ba" strokeWidth="3" />
          </Ico>
        </IconButton>
        <IconButton label="Настройка" className="size-4">
          <Ico className="size-[14px]">
            <path d="M7 7L14 14" stroke="#b5b8ba" strokeWidth="3" />
            <path d="M4 1A4 4 0 1 0 9 5" stroke="#b5b8ba" strokeWidth="2" />
          </Ico>
        </IconButton>
      </div>
      <Ico className="mr-1 ml-[5px] size-[15px]">
        <path d="M1 2H15V14H1Z" fill="#6a7078" stroke="#4a5158" />
        <path d="M3 5L6 8L3 11M8 11H12" stroke="#1f2a38" strokeWidth="1.500" />
      </Ico>
      <Arrow className="w-[5px] text-[#40444a]" />
      <input
        aria-label="Командная строка"
        placeholder="Введите команду"
        className="ml-2 flex-1 bg-transparent font-['DejaVu_Sans_Mono',monospace] text-[12px] italic outline-none placeholder:text-[#50545a]"
      />
      <IconButton label="Журнал команд" className="h-full w-4">
        <Arrow className="w-[7px] rotate-180 text-[#202428]" />
      </IconButton>
    </div>
  )
}

function StatusGroup({ width, children }: { width: string; children: ReactNode }) {
  return (
    <div className={`flex h-[27px] items-center justify-around border border-[#7c7c7c] bg-[#4b4b4b] px-[2px] ${width}`}>
      {children}
    </div>
  )
}

function StatusBar() {
  return (
    <footer className="flex h-[31px] items-start border-b-2 border-black bg-[#383838]">
      <nav className="flex items-start gap-1 pl-[9px] leading-5 text-[#c9c9c9]">
        <button className="h-5 w-[70px] bg-linear-to-b from-[#5c5c5c] to-[#8a8a8a] font-bold text-white [clip-path:polygon(0_0,100%_0,calc(100%-5px)_100%,8px_100%,4px_80%)]">
          Модель
        </button>
        <button className="h-5 w-[51px] bg-[#595959] [clip-path:polygon(0_0,100%_0,calc(100%-6px)_100%,6px_100%)]">
          Лист1
        </button>
        <button className="h-5 w-[52px] bg-[#595959] [clip-path:polygon(0_0,100%_0,calc(100%-6px)_100%,6px_100%)]">
          Лист2
        </button>
        <button aria-label="Новый лист" className="flex h-[18px] w-[23px] items-center justify-center rounded-b-md bg-[#555]">
          <Ico className="size-2">
            <path d="M8 0V16M0 8H16" stroke="#ddd" strokeWidth="3.500" />
          </Ico>
        </button>
      </nav>
      <div className="ml-auto flex gap-[2px] pt-px">
        <StatusGroup width="w-[57px]">
          <button>МОДЕЛЬ</button>
        </StatusGroup>
        <StatusGroup width="w-16">
          <Ico>
            <path d="M3 0V16M6 0V16M10 0V16M13 0V16M0 3H16M0 6H16M0 10H16M0 13H16" stroke="#3f8cf0" />
          </Ico>
          <Ico>
            <path d="M0 1H16M0 4H16M0 7H16M0 10H16M0 13H16" stroke="#ddd" strokeDasharray="1 2" />
          </Ico>
          <Arrow className="w-2" />
        </StatusGroup>
        <StatusGroup width="w-[168px]">
          <Ico>
            <path d="M2 1V14H15M2 9H7V14" stroke="#ddd" strokeWidth="1.300" />
          </Ico>
          <Ico>
            <circle cx="7.500" cy="8" r="6" stroke="#3f8cf0" strokeWidth="1.800" />
            <path d="M7 8H16M7 8L13 2" stroke="#3f8cf0" strokeWidth="1.500" />
          </Ico>
          <Arrow className="w-2" />
          <Ico className="size-[18px]">
            <path d="M1 1L15 15M9 10V16M9 1V6" stroke="#ddd" />
          </Ico>
          <Arrow className="w-2" />
          <span className="h-full w-px bg-[#7c7c7c]" />
          <Ico>
            <path d="M15 2L2 14H16" stroke="#3f8cf0" strokeWidth="1.500" />
            <path d="M8 8L11 12" stroke="#3f8cf0" />
          </Ico>
          <Ico>
            <path d="M3 3H15V14H3Z" stroke="#3f8cf0" strokeWidth="1.500" />
            <path d="M1 1H5V5H1Z" fill="#0b3d12" stroke="#22b03a" />
          </Ico>
          <Arrow className="w-2" />
        </StatusGroup>
        <StatusGroup width="w-[110px]">
          <Ico>
            <path d="M6 1H9L10 8L15 14L12 14L8 11L4 14L0 14L5 8Z" fill="#3f8cf0" />
            <circle cx="12" cy="4" r="2.500" stroke="#3f8cf0" />
          </Ico>
          <Ico>
            <path d="M6 1H9L10 8L15 14L12 14L8 11L4 14L0 14L5 8Z" fill="#d6d6d6" />
            <path d="M14 1L11 5H15L12 8" stroke="#d6d6d6" />
          </Ico>
          <Ico>
            <path d="M7 1H9L10 8L15 14L12 14L8 11L4 14L1 14L6 8Z" fill="#d6d6d6" />
          </Ico>
          <button className="flex items-center gap-1">
            1:1 <Arrow className="w-2" />
          </button>
        </StatusGroup>
        <StatusGroup width="w-[38px]">
          <Ico className="size-[14px]">
            <path d="M8 1V15M1 8H15M3 3L13 13M13 3L3 13" stroke="#d6d6d6" strokeWidth="3" />
            <circle cx="8" cy="8" r="3.500" fill="#4b4b4b" stroke="#d6d6d6" strokeWidth="3" />
          </Ico>
          <Arrow className="w-2" />
        </StatusGroup>
        <StatusGroup width="w-[25px]">
          <Ico className="size-[14px]">
            <path d="M8 1V15M1 8H15" stroke="#ddd" strokeWidth="2.500" />
          </Ico>
        </StatusGroup>
        <StatusGroup width="w-[25px]">
          <Ico>
            <path d="M1 1H7V7H1ZM8 9L12 15H4Z" stroke="#ddd" />
            <circle cx="12" cy="6" r="3" stroke="#ddd" />
          </Ico>
        </StatusGroup>
        <StatusGroup width="w-[25px]">
          <Ico>
            <circle cx="8" cy="8" r="7" fill="#1458b0" stroke="#3f8cf0" strokeWidth="1.500" />
            <path d="M6 9L8 11L11 7" stroke="#6fb0ff" />
          </Ico>
        </StatusGroup>
        <StatusGroup width="w-[50px]">
          <Ico>
            <path d="M1 2H15V14H1Z" stroke="#ddd" />
            <path d="M13 4V8L9 4ZM3 12V8L7 12Z" fill="#ddd" />
            <path d="M12 5L4 11" stroke="#ddd" />
          </Ico>
          <Ico>
            <path d="M1 3H15M1 8H15M1 13H15" stroke="#ddd" strokeWidth="2" />
          </Ico>
        </StatusGroup>
      </div>
    </footer>
  )
}

/* red marks that number the steps */
function StepMarks() {
  return (
    <svg className="pointer-events-none absolute top-0 left-0 h-[340px] w-[980px]" fill="none">
      <ellipse cx="897" cy="88" rx="57" ry="66" stroke="#ed1c24" strokeWidth="9" />
      <circle cx="211" cy="257" r="27" stroke="#ed1c24" strokeWidth="7" />
      <circle cx="382" cy="249" r="4" fill="#d8343c" />
      <text x="815" y="197" fontSize="54" fontWeight="700" fill="#ed1c24" fontFamily="'DejaVu Sans Condensed', sans-serif">
        1
      </text>
      <text x="146" y="322" fontSize="56" fontWeight="700" fill="#ed1c24" fontFamily="'Open Sans', sans-serif">
        2
      </text>
    </svg>
  )
}

export default function App() {
  return (
    <div className="relative flex min-h-screen flex-col overflow-hidden border-l-2 border-[#1a1d22] bg-[#383838] font-['Noto_Sans',sans-serif] text-xs text-[#f0f0f0]">
      <header className="relative">
        <div className="flex h-[23px] items-start bg-linear-to-r from-[#2f5a90] via-[#4a6b94] to-[#3d5f88] pl-[38px]">
          <QuickAccess />
          <h1 className="flex h-[23px] min-w-0 flex-1 items-center justify-center overflow-hidden border-b border-[#a8bdd4] bg-[linear-gradient(90deg,#305d93_0%,#2f5583_22%,#213e62_31%,#7089a4_35%,#5f7c9c_58%,#8a9fb4_68%,#1d3c63_72%,#16335a_100%)] whitespace-pre text-[#0b1420]">
            Autodesk AutoCAD 2016 - СТУДЕНЧЕСКАЯ ВЕРСИЯ   Чертеж1.dwg
          </h1>
          <InfoCenter />
          <WindowButtons />
        </div>
        <RibbonTabs />
        <Ribbon />
        <button
          aria-label="Меню приложения"
          className="absolute top-0 left-0 flex h-[41px] w-[39px] items-center justify-center border border-black bg-linear-to-b from-[#a2a2a2] to-[#585858]"
        >
          <svg viewBox="0 0 24 26" className="w-6" aria-hidden="true">
            <path d="M8 1H15L24 24L18 25L15 20H9L6 25L0 24Z" fill="#d42a2a" />
            <path d="M12 8L14 15H9Z" fill="#8a8a8a" />
            <path d="M8 1L12 8L6 25L0 24Z" fill="#b01c20" />
          </svg>
          <Arrow className="w-[7px] text-[#222]" />
        </button>
      </header>

      <DocumentTabs />

      <div className="flex flex-1">
        <main className="relative flex-1 overflow-hidden bg-[#212830]">
          <Drawing />
          <p className="absolute top-1.5 left-0.5 leading-4">[−][Сверху][2D-каркас]</p>
          <div className="absolute top-2 right-[9px] flex gap-1">
            <IconButton label="Свернуть чертеж" className="size-4">
              <Ico className="size-3">
                <path d="M2 10H14V14H2Z" fill="#eee" />
              </Ico>
            </IconButton>
            <IconButton label="Восстановить чертеж" className="size-4">
              <Ico className="size-3">
                <path d="M5 4V2H14V11H12M2 5H11V14H2Z" stroke="#eee" strokeWidth="2" />
              </Ico>
            </IconButton>
            <IconButton label="Закрыть чертеж" className="size-4">
              <Ico className="size-3">
                <path d="M3 2L13 14M13 2L3 14" stroke="#eee" strokeWidth="3" />
              </Ico>
            </IconButton>
          </div>
          <ViewCube />
          <NavigationBar />
          <LayerPalette />
          <CommandLine />
        </main>
        <div className="w-2 border-r-2 border-[#14181d] bg-linear-to-b from-[#d4e8f6] to-[#a9c9de]" />
      </div>

      <StatusBar />
      <StepMarks />
    </div>
  )
}
